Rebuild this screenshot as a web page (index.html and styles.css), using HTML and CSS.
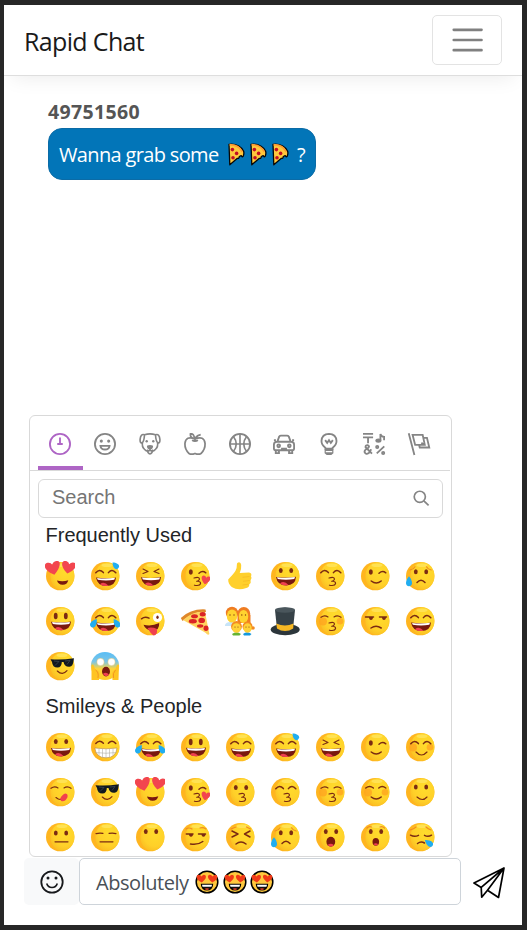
FILE: index.html
```
<!DOCTYPE html>
<html lang="en">
<head>
<meta charset="utf-8">
<title>Rapid Chat</title>
<link rel="stylesheet" href="styles.css">
</head>
<body>
<svg class="defs" aria-hidden="true">
  <defs>
    <radialGradient id="skin" cx=".6" cy=".35" r=".65"><stop offset="0" stop-color="#ffdc2c"/><stop offset=".75" stop-color="#ffd029"/><stop offset="1" stop-color="#fbc224"/></radialGradient>
    <linearGradient id="fear" x1="0" y1="0" x2="0" y2="1"><stop offset="0" stop-color="#58bdf5"/><stop offset=".35" stop-color="#7cc5e5"/><stop offset=".6" stop-color="#ffd43a"/><stop offset="1" stop-color="#ffcb25"/></linearGradient>
    <g id="base"><circle cx="15.2" cy="15.1" r="14.2" fill="#ffb51f"/><ellipse cx="17.4" cy="15" rx="12" ry="13.8" fill="url(#skin)"/><ellipse cx="17" cy="4.2" rx="5.5" ry="1.8" fill="#ffe765" opacity=".7"/></g>
    <g id="dots" fill="#7b2b12"><ellipse cx="10.8" cy="10.6" rx="1.9" ry="2.5"/><ellipse cx="21.2" cy="10.6" rx="1.9" ry="2.5"/></g>
    <g id="tall" fill="#7b2b12"><ellipse cx="10.7" cy="10" rx="1.9" ry="3.2"/><ellipse cx="20.8" cy="10" rx="1.9" ry="3.2"/></g>
    <path id="arcs" d="M5.8 11.8Q9.5 7.2 13.4 11.6M18.4 11.6Q22 7.2 25.8 11.8" class="ink"/>
    <path id="thin-arcs" d="M6 11.3Q9.5 8.6 13 11M19 11Q22.4 8.6 26 11.3" class="ink thin"/>
    <path id="squint" d="M8 8l5 2.5-5 2M24 8l-5 2.5 5 2" class="ink thin"/>
    <g id="winking"><ellipse cx="10.8" cy="11" rx="2" ry="2.7" fill="#7b2b12"/><path d="M19 12.2Q22.5 9.2 25.8 11.8" class="ink"/></g>
    <g id="laugh"><path d="M6 16.6Q16 18 26 16.4Q25.5 25 16.2 25.1Q7.3 25 6 16.6Z" fill="#79190f"/><path d="M7 16.9Q16 18 25 16.7L24.3 18.7Q16 20.3 7.8 18.7Z" fill="#fff"/><path d="M10 23.2Q14 19.8 18.5 24.8Q13.5 25.8 10 23.2Z" fill="#ef4050"/></g>
    <path id="smile" d="M11.2 20Q16.2 24 21.2 20" class="ink"/>
    <path id="kissing-lips" d="M14 17Q19.5 15.4 19.5 18.2Q19 20 16.7 20.3Q20.7 20 20.6 22.4Q20 25.2 14.4 24.2" class="ink thin"/>
    <g id="cheeks" fill="#ffa31f" opacity=".75"><circle cx="8" cy="15.5" r="4"/><circle cx="25" cy="15.3" r="3.3"/></g>
    <path id="heart" d="M0 4C-7-1-6-6-3-6Q-.7-6 0-3.8Q1-6.2 3.4-6C7-5.5 5 0 0 4Z" fill="#f2464f"/>
    <path id="drop" d="M0-5C4-.5 4 5 0 5S-4-.5 0-5Z" fill="#20adf0"/>

    <symbol id="heart-eyes" viewBox="0 0 30 30"><use href="#base"/><use href="#heart" transform="translate(8.3 8.6) rotate(-12) scale(1.45 1.3)"/><use href="#heart" transform="translate(23.3 7.8) rotate(12) scale(1.35 1.2)"/><path d="M12 19.5Q17.5 21 23.3 19.3Q22 24 17.5 23.8Q13 23.4 12 19.5Z" fill="#79190f"/></symbol>
    <symbol id="grinning" viewBox="0 0 30 30"><use href="#base"/><use href="#dots" y="-1"/><use href="#laugh" y="-.7"/></symbol>
    <symbol id="smiley" viewBox="0 0 30 30"><use href="#base"/><use href="#tall"/><use href="#laugh" y="-.8"/></symbol>
    <symbol id="happy" viewBox="0 0 30 30"><use href="#base"/><use href="#arcs"/><use href="#laugh"/></symbol>
    <symbol id="sweat" viewBox="0 0 30 30"><use href="#base"/><use href="#arcs"/><use href="#laugh"/><use href="#drop" transform="translate(25.4 4.4) rotate(-45) scale(.9 .8)"/></symbol>
    <symbol id="laughing" viewBox="0 0 30 30"><use href="#base"/><use href="#squint"/><use href="#laugh" y="-.3"/></symbol>
    <symbol id="joy" viewBox="0 0 30 30"><use href="#base"/><use href="#arcs"/><use href="#laugh"/><use href="#drop" transform="translate(4 17) rotate(35) scale(.95)"/><use href="#drop" transform="translate(26.5 17) rotate(-35) scale(.95)"/></symbol>
    <symbol id="kiss-heart" viewBox="0 0 30 30"><use href="#base"/><use href="#winking"/><use href="#kissing-lips"/><use href="#heart" transform="translate(25.5 20) rotate(12) scale(.85)"/></symbol>
    <symbol id="kiss-smile" viewBox="0 0 30 30"><use href="#base"/><use href="#arcs"/><use href="#kissing-lips"/></symbol>
    <symbol id="kiss-closed" viewBox="0 0 30 30"><use href="#base"/><use href="#cheeks"/><use href="#thin-arcs"/><use href="#kissing-lips"/></symbol>
    <symbol id="kissing" viewBox="0 0 30 30"><use href="#base"/><use href="#dots"/><use href="#kissing-lips"/></symbol>
    <symbol id="wink" viewBox="0 0 30 30"><use href="#base"/><use href="#winking"/><use href="#smile"/></symbol>
    <symbol id="relieved-cry" viewBox="0 0 30 30"><use href="#base"/><path d="M5 9Q8.5 8.5 10 5.8M21.5 5.8Q23 8.5 26.2 9" class="brow"/><use href="#dots" y=".2"/><path d="M12 21.5Q16 17 20 21.5" class="ink"/><use href="#drop" transform="translate(4 20.2)"/></symbol>
    <symbol id="tongue" viewBox="0 0 30 30"><use href="#base"/><path d="M6.5 12.8Q10 10 14 12.2" class="ink"/><circle cx="22.5" cy="11.5" r="4.6" fill="#fff"/><ellipse cx="22.5" cy="11.3" rx="1.2" ry="1.8" fill="#7b2b12"/><path d="M8.5 18.7Q16.5 20.7 24.2 17Q24.5 24.6 17.8 24.8Q10.5 24.3 8.5 18.7Z" fill="#79190f"/><path d="M12.5 22Q17 20.7 22 23Q22.6 29.4 18.7 29.4Q16.7 29.2 12.5 22Z" fill="#f0404e"/></symbol>
    <symbol id="unamused" viewBox="0 0 30 30"><use href="#base"/><path d="M5.5 11H13.5M19.5 11H26.5M11 22Q16 18.6 21.2 22" class="ink"/><path d="M9 11h4q0 3-2 3t-2-3M22 11h4q0 3-2 3t-2-3" fill="#7b2b12"/></symbol>
    <symbol id="cool" viewBox="0 0 30 30"><use href="#base"/><path d="M5.5 8.2Q16 9.3 29 7.3L28.5 10Q28 15.5 24.5 15.8Q19.5 16.2 18.5 11L16.8 11Q16.8 16.4 12.4 16.6Q7.5 16.6 7 11Z" fill="#111920"/><path d="M9 10l5 .5-4 4M20 10l5-.5-3 4" fill="none" stroke="#3b4650" stroke-width=".8"/><path d="M12.3 20Q17.5 25 22 19.7" class="ink thin"/></symbol>
    <symbol id="scream" viewBox="0 0 30 30"><circle cx="15" cy="15" r="14.1" fill="url(#fear)"/><circle cx="10.5" cy="11" r="3.7" fill="#fff" stroke="#e0b54a" stroke-width=".4"/><circle cx="21.5" cy="11" r="3.7" fill="#fff" stroke="#e0b54a" stroke-width=".4"/><ellipse cx="16" cy="20.6" rx="4" ry="4.8" fill="#79190f"/><path d="M12.8 23Q16 20.5 19 23.5Q16 27 12.8 23Z" fill="#ef4050"/><path d="M1.5 14.2Q3 12.5 4 15L5 18Q10 20 9.5 24L9 29H1.5ZM29 14Q27.5 12.5 26.5 15.5L25.5 18Q22 20 22 24L22.5 29H28.5Z" fill="#ffc423"/><path d="M5.5 19Q9 21 8 27M25.5 19Q22.5 22 23.5 27" fill="none" stroke="#ef8c24" stroke-width=".8"/></symbol>
    <symbol id="teeth" viewBox="0 0 30 30"><use href="#base"/><use href="#arcs" y="-.3"/><path d="M4.8 16Q16 17.6 27 16Q26 25.8 16 25.8Q6 25.8 4.8 16Z" fill="#fff" stroke="#b98a4c" stroke-width=".6"/><path d="M5.5 20.5Q16 22 26.4 20.5M9 16.5v7M12.5 17v8.5M16 17v9M19.5 17v8.5M23 16.5v7" fill="none" stroke="#aaa99e" stroke-width=".55"/></symbol>
    <symbol id="blush" viewBox="0 0 30 30"><use href="#base"/><use href="#cheeks"/><use href="#arcs"/><path d="M11 20Q16.5 26 22 20" class="ink thin"/></symbol>
    <symbol id="relaxed" viewBox="0 0 30 30"><use href="#base"/><use href="#cheeks"/><path d="M5.8 11Q9.5 8 13.4 11M18.8 11Q22 8 25.8 11" class="ink"/><use href="#smile"/></symbol>
    <symbol id="slight" viewBox="0 0 30 30"><use href="#base"/><use href="#dots" y="-.7"/><path d="M12 20Q17.5 25 22 20" class="ink thin"/></symbol>
    <symbol id="yum" viewBox="0 0 30 30"><use href="#base"/><use href="#thin-arcs"/><path d="M11 20.5Q15.5 24.5 19 20.5" class="ink thin"/><path d="M15 22Q17.2 17 20.5 16.5Q23.5 17 22.3 20.5Q20.5 25 16.2 24Z" fill="#f2424d"/></symbol>
    <symbol id="neutral" viewBox="0 0 30 30"><use href="#base"/><use href="#dots" y=".3"/><path d="M10 19.8H23" class="ink thin"/></symbol>
    <symbol id="blank" viewBox="0 0 30 30"><use href="#base"/><path d="M6 11.6Q9.5 10.8 13 11.4M19 11.4Q23 10.8 26 11.6M10 19.8H23" class="ink thin"/></symbol>
    <symbol id="silent" viewBox="0 0 30 30"><use href="#base"/><use href="#dots" y="-1"/></symbol>
    <symbol id="smirk" viewBox="0 0 30 30"><use href="#base"/><path d="M6 7Q9 5 12 7M20 6Q23 5 26 7" class="brow"/><path d="M6.3 12H13M18.5 12H25.5M10.5 22Q18 23.2 22.8 19.5" class="ink"/><path d="M9 12h4q0 2.8-2 2.8T9 12M21.5 12h4q0 2.8-2 2.8t-2-2.8" fill="#7b2b12"/></symbol>
    <symbol id="persevere" viewBox="0 0 30 30"><use href="#base"/><path d="M6 7l5-2M25.5 7l-4-2" class="brow"/><path d="M7 9l6 3-6 3M25 9l-5.5 3 5.5 3M11 22Q16 18 21 22" class="ink"/></symbol>
    <symbol id="open" viewBox="0 0 30 30"><use href="#base"/><use href="#dots" y="-1"/><ellipse cx="15.8" cy="19.8" rx="4.4" ry="5" fill="#79190f"/><path d="M12.4 23Q16 20.5 19 23.2Q16 26.2 12.4 23Z" fill="#ef4050"/></symbol>
    <symbol id="hushed" viewBox="0 0 30 30"><use href="#base"/><path d="M7 6Q9 4 11.5 5M20 5Q22.5 4 24.5 6" class="brow"/><use href="#dots" y="-1"/><ellipse cx="15.8" cy="19.8" rx="3.3" ry="3.9" fill="#79190f"/><path d="M13.3 22Q16 20.5 18.2 22.2Q16 24.8 13.3 22Z" fill="#ef4050"/></symbol>
    <symbol id="sleepy" viewBox="0 0 30 30"><use href="#base"/><path d="M5 8Q9 7 11 5M21 5Q23 7 26 8" class="brow"/><path d="M5.5 13.2Q9.5 15.4 13.5 13.4M19.5 13.4Q23 15.4 26.5 13.2M12.5 21.5Q16 18.7 19.5 21" class="ink"/><use href="#drop" transform="translate(23.7 21) rotate(-52) scale(.95)"/></symbol>
    <symbol id="thumb" viewBox="0 0 30 30"><path d="M13.2 1.5Q15.8.8 16.2 4Q16.6 8 14.7 12L24 11.5Q27.4 12.2 26 15.3Q27.5 17.6 25.6 19.3Q26.4 22 24.3 23.2Q24.5 26.3 21.3 27Q13 30 6.7 26Q3 22.5 3.2 18.5Q8.3 13 10.4 10Q12 7.6 11.9 3.2Q12 1.9 13.2 1.5Z" fill="#ffd02c"/><path d="M17.5 16.3l7-.8M18 20.3l6.8-.8M17.5 24l6-.8" stroke="#f4b823" stroke-width=".7"/></symbol>
    <symbol id="pizza" viewBox="0 0 30 30"><path d="M.8 12Q11 2.5 25.5 3.4L26 6Q13 5 2.5 15Z" fill="#df872a"/><path d="M3 14Q14 4.5 25 6L29.4 28Q28 29.8 25.5 26.7Z" fill="#ffd460"/><g fill="#db2425"><ellipse cx="14.5" cy="10.2" rx="3.4" ry="2"/><ellipse cx="22.7" cy="8.3" rx="3" ry="2.2"/><ellipse cx="12.8" cy="15.3" rx="4" ry="2.2"/><ellipse cx="21.7" cy="14.4" rx="3.3" ry="2.7"/><ellipse cx="20.2" cy="20" rx="3.2" ry="1.7"/><ellipse cx="26" cy="22.2" rx="2.5" ry="2.7"/></g></symbol>
    <symbol id="family" viewBox="0 0 30 30"><path d="M0 19Q1 15.5 7 16L15 20H0Z" fill="#c7e4f7"/><g fill="#ef7c22"><ellipse cx="7" cy="7" rx="6.2" ry="6.3"/><ellipse cx="18.8" cy="8" rx="6.5" ry="7"/><path d="M12.5 9h13v8h-13z"/></g><g fill="#ffd32f"><ellipse cx="7" cy="10" rx="5.2" ry="6.6"/><ellipse cx="18.5" cy="10.5" rx="4.7" ry="6.6"/></g><path d="M7 28Q11.5 24.5 16 28L14.5 29.5H8Z" fill="#65b333"/><path d="M18 28Q22 24.5 26.5 28L25 29.5H19Z" fill="#1598dd"/><g fill="#f38b20"><circle cx="11.5" cy="20.5" r="5.4"/><circle cx="22.5" cy="20.5" r="5"/><circle cx="28" cy="22" r="1.8"/></g><g fill="#ffd237"><ellipse cx="11.5" cy="22" rx="4.4" ry="4.8"/><ellipse cx="22.5" cy="22" rx="4.2" ry="4.7"/></g><g fill="#844012"><circle cx="5" cy="9" r=".7"/><circle cx="9" cy="9" r=".7"/><circle cx="16.8" cy="9" r=".7"/><circle cx="20.5" cy="9" r=".7"/><circle cx="10" cy="21" r=".6"/><circle cx="13" cy="21" r=".6"/><circle cx="21" cy="21" r=".6"/><circle cx="24" cy="21" r=".6"/></g></symbol>
    <symbol id="hat" viewBox="0 0 30 30"><ellipse cx="15.2" cy="23.5" rx="14.5" ry="5.8" fill="#2c363b"/><path d="M5 4Q15-1 25 4L23 23Q15 28 7 23Z" fill="#364147"/><ellipse cx="15" cy="4" rx="10" ry="2.7" fill="#4a565c"/><path d="M6.3 17.5Q15 21.5 23.5 17.5L23.2 22.5Q15 27.5 7 22.5Z" fill="#f7b824"/></symbol>
    <symbol id="slice" viewBox="0 0 18 24"><path d="M2 2.3Q12 1.4 16.5 9Q17.4 11 16.3 14Q15 15.7 14.2 13.6L12.3 14.5Q12 17 10.4 16.3L2.8 22.8Z" fill="#ffc83d" stroke="#080808" stroke-width="1.3" stroke-linejoin="round"/><path d="M2.5 2.7Q12 2.8 15.3 10" fill="none" stroke="#ff9d32" stroke-width="1.8"/><g fill="#c20d24"><circle cx="5.4" cy="7.6" r="1.8"/><circle cx="9.6" cy="11.4" r="1.8"/><circle cx="6" cy="15.8" r="1.8"/></g></symbol>
    <symbol id="love" viewBox="0 0 24 24"><circle cx="12" cy="12" r="10.8" fill="#ffc83d" stroke="#000" stroke-width="1.5"/><path d="M6.8 12.4C0 9.5.9 4.8 3.7 4.7Q5.6 4.7 6.5 6.5Q8.3 3.8 10.4 5.3Q12.5 8 6.8 12.4ZM17.2 12.4C11.5 8 12.5 5 14.6 4.7Q16.5 4.6 17.6 6.5Q19.5 3.9 21.8 5.2Q24 9 17.2 12.4Z" fill="#f03a17"/><path d="M6.4 14.4H17.6Q17 20 12 20T6.4 14.4Z" fill="#111" stroke="#000" stroke-width="1.1"/><path d="M7 14.8H17L16.5 16.8H7.5Z" fill="#fff"/><path d="M9.3 19Q12 17.3 14.7 19L12 19.9Z" fill="#ed3d27"/></symbol>
  </defs>
</svg>

<main class="app">
  <header class="navbar">
    <div class="brand">Rapid Chat</div>
    <button class="toggle" aria-label="Menu"><svg width="38" height="38" viewBox="0 0 30 30"><path d="M4.5 7h22M4.5 15h22M4.5 23h22" fill="none" stroke="#808080" stroke-width="2" stroke-linecap="round"/></svg></button>
  </header>

  <section class="messages">
    <div class="sender">49751560</div>
    <div class="bubble"><span>Wanna grab some</span><span class="slices"><svg><use href="#slice"/></svg><svg><use href="#slice"/></svg><svg><use href="#slice"/></svg></span><span>?</span></div>
  </section>

  <section class="picker">
    <nav class="tabs">
      <div class="tab active"><svg viewBox="0 0 24 24"><circle cx="12" cy="12" r="11"/><path d="M12 5v8.2M9 12h6" /></svg></div>
      <div class="tab"><svg viewBox="0 0 24 24"><circle cx="12" cy="12" r="11"/><path d="M7 14h10q-.5 4-5 4t-5-4z"/><g class="solid"><circle cx="8" cy="8.8" r="1.7"/><circle cx="16" cy="8.8" r="1.7"/></g></svg></div>
      <div class="tab"><svg viewBox="0 0 24 24"><path d="M6 2Q12-.2 18 2M6 2Q1.8.3 1.2 7Q1 11 3 11Q5.6 10 6 2ZM18 2Q22.2.3 22.8 7Q23 11 21 11Q18.4 10 18 2ZM3.8 10Q2.8 15 6.2 18Q8 20 9.5 19.8M20.2 10Q21.2 15 17.8 18Q16 20 14.5 19.8M12 17v2.5M8.5 18.5Q10.2 20 12 18.8Q13.8 20 15.5 18.5M9.8 19.5v1.8q2.2 3 4.4 0v-1.8" stroke-width="1.8"/><path class="solid" d="M8.6 14q3.4-2 6.8 0q0 4-3.4 4t-3.4-4z"/><g class="solid"><circle cx="8.4" cy="9" r="1.3"/><circle cx="15.6" cy="9" r="1.3"/></g></svg></div>
      <div class="tab"><svg viewBox="0 0 24 24"><path d="M12 6.5Q2 2.6 1 11.5Q.8 18 5.5 22.4Q8 24 12 22.3Q16 24 18.5 22.4Q23.2 18 23 11.5Q22 2.6 12 6.5ZM8.8 7.8Q12 9.8 15.2 7.8M12 8Q11.8 3.4 18.2 1.7M11.5 6.5Q6.5 5.2 7 1Q11 0 11.5 6.5Z" stroke-width="1.9"/></svg></div>
      <div class="tab"><svg viewBox="0 0 24 24"><circle cx="12" cy="12" r="11"/><path d="M1 12h22M12 1v22M4.8 3.8Q11 12 4.8 20.2M19.2 3.8Q13 12 19.2 20.2" stroke-width="1.8"/></svg></div>
      <div class="tab"><svg viewBox="0 0 24 24"><path d="M4.8 9.4L6.7 4Q7 2.8 8.5 2.8h7Q17 2.8 17.3 4l1.9 5.4M1 17v-4.2Q1 9.5 4.2 9.5h15.6Q23 9.5 23 12.8V17q0 1.8-1.8 1.8H2.8Q1 18.8 1 17ZM3 19v3h3.5v-3M17.5 19v3H21v-3M1 7.8h2.2M20.8 7.8H23M8.8 17.2h6.4"/><g><circle cx="6.2" cy="14" r="1.5"/><circle cx="17.8" cy="14" r="1.5"/></g></svg></div>
      <div class="tab"><svg viewBox="0 0 24 24"><path d="M8 16Q3.8 13.2 3.8 8.8Q4.2 1 12 .9Q19.8 1 20.2 8.8Q20.2 13.2 16 16V17H8ZM7.8 7.8l2.2 3 2-3 2 3 2.2-3"/><path class="solid" d="M7.2 17.5h9.6V22l-2.3 2h-5l-2.3-2z"/><path d="M8.5 20.3h7" stroke="#fff" stroke-width="1.3"/></svg></div>
      <div class="tab"><svg viewBox="0 0 24 24"><path d="M0 1h11M0 4.8h11M5.5 5v6.2M19 8V1q.5 3 4 3.2V8M15 22.2L23.2 14.6M9.8 22.5L2.8 15.5q-.3-2.3 2.2-2.3q3.2 1.3 0 3.7q-3.8 1.5-3.3 4Q3.2 24 6.3 21.8Q8.3 20 8.8 17.8"/><g class="solid"><ellipse cx="16.8" cy="8.3" rx="3.3" ry="2.4"/></g><g><circle cx="15.5" cy="15.3" r="1.2"/><circle cx="22" cy="21.8" r="1.2"/></g></svg></div>
      <div class="tab"><svg viewBox="0 0 24 24"><path d="M.8.2L7 24M5 2h11l2.3 11H7.8ZM17.5 5.3h3.2l2.5 10.5H12.8l-.6-2.5M17.8 13l-3.2-2.3"/></svg></div>
    </nav>
    <div class="search"><span>Search</span><svg width="17" height="17" viewBox="0 0 18 18"><circle cx="7.2" cy="7.2" r="5.9"/><path d="M11.5 11.5l5 4.8"/></svg></div>
    <h2>Frequently Used</h2>
    <div class="grid">
      <svg><use href="#heart-eyes"/></svg><svg><use href="#sweat"/></svg><svg><use href="#laughing"/></svg><svg><use href="#kiss-heart"/></svg><svg><use href="#thumb"/></svg><svg><use href="#grinning"/></svg><svg><use href="#kiss-smile"/></svg><svg><use href="#wink"/></svg><svg><use href="#relieved-cry"/></svg>
      <svg><use href="#smiley"/></svg><svg><use href="#joy"/></svg><svg><use href="#tongue"/></svg><svg><use href="#pizza"/></svg><svg><use href="#family"/></svg><svg><use href="#hat"/></svg><svg><use href="#kiss-closed"/></svg><svg><use href="#unamused"/></svg><svg><use href="#happy"/></svg>
      <svg><use href="#cool"/></svg><svg><use href="#scream"/></svg>
    </div>
    <h2>Smileys &amp; People</h2>
    <div class="grid">
      <svg><use href="#grinning"/></svg><svg><use href="#teeth"/></svg><svg><use href="#joy"/></svg><svg><use href="#smiley"/></svg><svg><use href="#happy"/></svg><svg><use href="#sweat"/></svg><svg><use href="#laughing"/></svg><svg><use href="#wink"/></svg><svg><use href="#blush"/></svg>
      <svg><use href="#yum"/></svg><svg><use href="#cool"/></svg><svg><use href="#heart-eyes"/></svg><svg><use href="#kiss-heart"/></svg><svg><use href="#kissing"/></svg><svg><use href="#kiss-smile"/></svg><svg><use href="#kiss-closed"/></svg><svg><use href="#relaxed"/></svg><svg><use href="#slight"/></svg>
      <svg><use href="#neutral"/></svg><svg><use href="#blank"/></svg><svg><use href="#silent"/></svg><svg><use href="#smirk"/></svg><svg><use href="#persevere"/></svg><svg><use href="#relieved-cry"/></svg><svg><use href="#open"/></svg><svg><use href="#hushed"/></svg><svg><use href="#sleepy"/></svg>
    </div>
  </section>

  <footer class="composer">
    <button class="emoji-button" aria-label="Emoji"><svg width="24" height="24" viewBox="0 0 24 24"><circle cx="12" cy="12" r="10.7" fill="none" stroke="#17191c" stroke-width="1.8"/><circle cx="8" cy="8" r="1.5" fill="#17191c"/><circle cx="16" cy="8" r="1.5" fill="#17191c"/><path d="M6.7 13.5Q8 17.5 12 17.5T17.3 13.5" fill="none" stroke="#17191c" stroke-width="1.6"/></svg></button>
    <div class="field"><span>Absolutely</span><span class="loves"><svg><use href="#love"/></svg><svg><use href="#love"/></svg><svg><use href="#love"/></svg></span></div>
    <button class="send" aria-label="Send"><svg width="32" height="32" viewBox="0 0 32 32"><path d="M31 1L1 16l7.2 4.4L31 1 25.5 30.5 14.5 23.2 31 1M8.2 20.4L8.7 30.2 14.5 23.2" fill="none" stroke="#000" stroke-width="1.7" stroke-linejoin="round"/></svg></button>
  </footer>
</main>
</body>
</html>
```

FILE: styles.css
```
* { box-sizing: border-box; }
body {
  margin: 0;
  height: 930px;
  overflow: hidden;
  background: #272727;
  padding: 5px 5px 5px 4px;
  font-family: "Open Sans", "Noto Sans", sans-serif;
}
button { padding: 0; border: 0; background: none; font: inherit; }
svg { display: block; flex: none; }
.defs { position: absolute; width: 0; height: 0; }
.ink { fill: none; stroke: #7b2b12; stroke-width: 1.5; stroke-linecap: round; stroke-linejoin: round; }
.ink.thin { stroke-width: 1.15; }
.brow { fill: none; stroke: #f08c22; stroke-width: 1.2; stroke-linecap: round; }

.app { height: 920px; background: #fff; display: flex; flex-direction: column; overflow: hidden; }

.navbar {
  height: 71px;
  flex: none;
  display: flex;
  align-items: flex-start;
  justify-content: space-between;
  padding: 10px 20px 0;
  border-bottom: 1px solid #dedede;
  box-shadow: 0 10px 20px -8px rgba(0, 0, 0, .08);
}
.brand { font-size: 25px; line-height: 53px; letter-spacing: -.65px; color: #1a1a1a; }
.toggle {
  width: 70px;
  height: 50px;
  border: 1px solid #e3e3e3;
  border-radius: 5px;
  display: flex;
  align-items: center;
  justify-content: center;
}

.messages { height: 339px; flex: none; padding: 21px 44px 0; }
.sender { height: 31px; line-height: 29px; font-size: 19.5px; letter-spacing: .35px; font-weight: 700; color: #555; }
.bubble {
  width: 268px;
  height: 52px;
  display: flex;
  align-items: center;
  padding: 0 10px;
  border: 1px solid #0b6ba6;
  border-radius: 14px;
  background: #0275b8;
  color: #fff;
  font-size: 20px;
  letter-spacing: -.65px;
  white-space: nowrap;
}
.bubble > span:first-child { width: 168px; }
.slices { display: flex; gap: 4px; width: 70px; }
.slices svg { width: 18px; height: 24px; }

.picker {
  width: 423px;
  height: 442px;
  flex: none;
  margin-left: 25px;
  border: 1px solid #d9d9d9;
  border-radius: 6px;
  font-family: "Liberation Sans", Arial, sans-serif;
  color: #222427;
  overflow: hidden;
}
.tabs { display: flex; height: 55px; width: 420px; padding: 0 8px; border-bottom: 1px solid #d9d9d9; }
.tab { width: 45px; display: flex; align-items: center; justify-content: center; padding: 5px 1px 0 0; border-bottom: 4px solid transparent; color: #858585; }
.tab.active { color: #ae65c5; border-color: #ae65c5; }
.tab svg { width: 22px; height: 22px; fill: none; stroke: currentColor; stroke-width: 2; overflow: visible; }
.tab .solid { fill: currentColor; stroke: none; }
.search {
  width: 405px;
  height: 39px;
  margin: 8px 8px 0;
  padding: 0 12px 0 13px;
  border: 1px solid #d9d9d9;
  border-radius: 6px;
  display: flex;
  align-items: center;
  justify-content: space-between;
  font-size: 20px;
  color: #757575;
}
.search span { line-height: 35px; height: 38px; }
.search svg { fill: none; stroke: #858585; stroke-width: 1.8; }
.picker h2 { margin: 0; padding-left: 15.5px; height: 36px; line-height: 35px; font-size: 20px; font-weight: 400; }
.grid { display: grid; grid-template-columns: repeat(9, 45px); grid-auto-rows: 45px; margin-left: 8px; align-items: start; justify-items: start; }
.grid svg { width: 30px; height: 30px; margin: 7px 0 0 7px; }

.composer { display: flex; height: 47px; flex: none; margin: 1px 0 0 20px; }
.emoji-button { width: 55px; background: #f8f9fa; border-radius: 5px; display: flex; align-items: center; justify-content: center; }
.field {
  width: 382px;
  border: 1px solid #ced4da;
  border-radius: 5px;
  display: flex;
  align-items: center;
  padding-left: 16px;
  font-size: 20px;
  letter-spacing: -.45px;
  color: #495057;
}
.field > span:first-child { width: 99px; padding-top: 2px; }
.loves { display: flex; gap: 3.5px; }
.loves svg { width: 24px; height: 24px; }
.send { margin: 9px 0 0 12px; width: 32px; height: 32px; }
```
